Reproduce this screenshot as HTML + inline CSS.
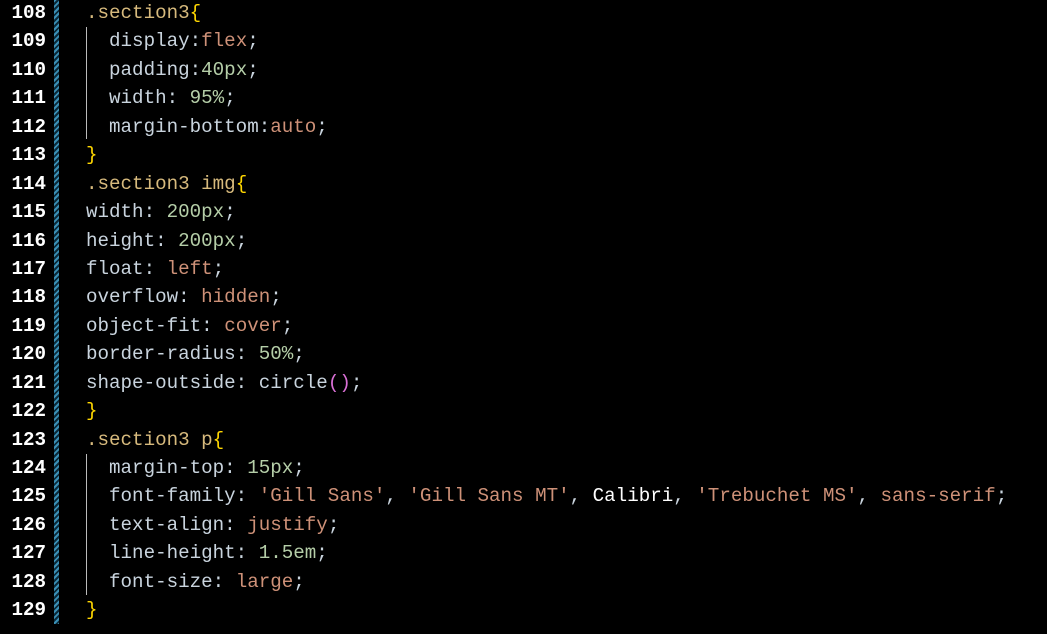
<!DOCTYPE html>
<html><head><style>
html,body{margin:0;padding:0;background:#000;width:1047px;height:634px;overflow:hidden}
.wrap{position:absolute;top:-1px;left:0;font-family:"Liberation Mono",monospace;font-size:19.2px;line-height:28.43px}
.ln{position:absolute;top:0;left:0;width:46px;text-align:right;color:#fff;font-weight:bold;white-space:pre}
.code{position:absolute;top:0;left:86px;color:#c9d4de;white-space:pre}
.stripe{position:absolute;left:54px;top:0;width:5px;height:624px;background:repeating-linear-gradient(135deg,#3a8fb5 0 2px,#0b2a3a 2px 4px)}
.g{position:absolute;left:86px;width:1px;background:#bbb}
.s{color:#d7ba7d}.b{color:#ffd700}.v{color:#ce9178}.n{color:#b5cea8}.w{color:#fff}.p{color:#da70d6}
</style></head><body>
<div class="stripe"></div>
<div class="g" style="top:27px;height:112px"></div>
<div class="g" style="top:454px;height:141px"></div>
<div class="wrap"><div class="ln">108
109
110
111
112
113
114
115
116
117
118
119
120
121
122
123
124
125
126
127
128
129</div><div class="code"><span class="s">.section3</span><span class="b">{</span>
  display:<span class="v">flex</span>;
  padding:<span class="n">40px</span>;
  width: <span class="n">95%</span>;
  margin-bottom:<span class="v">auto</span>;
<span class="b">}</span>
<span class="s">.section3 img</span><span class="b">{</span>
width: <span class="n">200px</span>;
height: <span class="n">200px</span>;
float: <span class="v">left</span>;
overflow: <span class="v">hidden</span>;
object-fit: <span class="v">cover</span>;
border-radius: <span class="n">50%</span>;
shape-outside: circle<span class="p">()</span>;
<span class="b">}</span>
<span class="s">.section3 p</span><span class="b">{</span>
  margin-top: <span class="n">15px</span>;
  font-family: <span class="v">'Gill Sans'</span>, <span class="v">'Gill Sans MT'</span>, <span class="w">Calibri</span>, <span class="v">'Trebuchet MS'</span>, <span class="v">sans-serif</span>;
  text-align: <span class="v">justify</span>;
  line-height: <span class="n">1.5em</span>;
  font-size: <span class="v">large</span>;
<span class="b">}</span></div></div>
</body></html>
